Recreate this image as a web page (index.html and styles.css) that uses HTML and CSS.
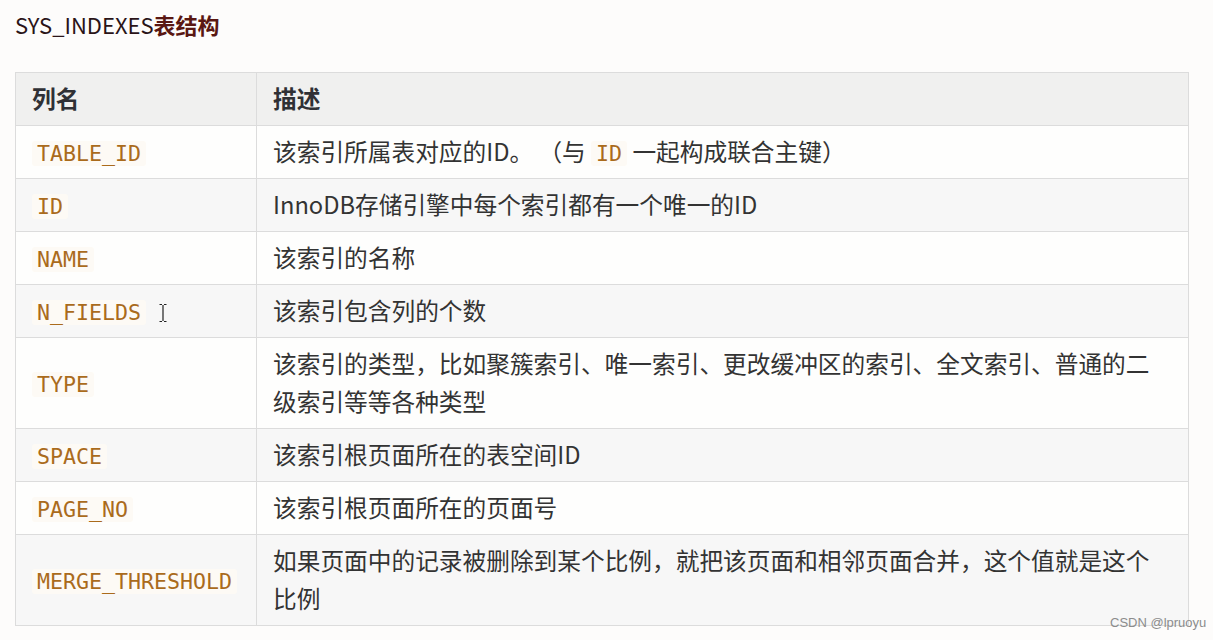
FILE: index.html
```html
<!DOCTYPE html>
<html lang="zh">
<head>
<meta charset="utf-8">
<link rel="stylesheet" href="styles.css">
</head>
<body>
<div class="page">
  <h3 class="title">SYS_INDEXES<span class="title-cn">表结构</span></h3>
  <table class="tbl">
    <colgroup><col class="c1"><col class="c2"></colgroup>
    <thead>
      <tr><th>列名</th><th>描述</th></tr>
    </thead>
    <tbody>
      <tr><td><code>TABLE_ID</code></td><td>该索引所属表对应的ID。 （与 <code>ID</code> 一起构成联合主键）</td></tr>
      <tr><td><code>ID</code></td><td>InnoDB存储引擎中每个索引都有一个唯一的ID</td></tr>
      <tr><td><code>NAME</code></td><td>该索引的名称</td></tr>
      <tr><td><code>N_FIELDS</code><span class="cursor"><svg width="10" height="20" viewBox="0 0 10 20"><path d="M1.5 1.5h2.5M6 1.5h2.5M5 2v16M1.5 18.5h2.5M6 18.5h2.5" stroke="#222" stroke-width="1.2" fill="none"/></svg></span></td><td>该索引包含列的个数</td></tr>
      <tr><td><code>TYPE</code></td><td>该索引的类型，比如聚簇索引、唯一索引、更改缓冲区的索引、全文索引、普通的二级索引等等各种类型</td></tr>
      <tr><td><code>SPACE</code></td><td>该索引根页面所在的表空间ID</td></tr>
      <tr><td><code>PAGE_NO</code></td><td>该索引根页面所在的页面号</td></tr>
      <tr><td><code>MERGE_THRESHOLD</code></td><td>如果页面中的记录被删除到某个比例，就把该页面和相邻页面合并，这个值就是这个比例</td></tr>
    </tbody>
  </table>
  <div class="watermark">CSDN @lpruoyu</div>
</div>
</body>
</html>
```
FILE: styles.css
```css
html, body {
  margin: 0;
  padding: 0;
  background: #fdfcfb;
}
.page {
  position: relative;
  width: 1213px;
  height: 640px;
  padding: 9px 0 0 15px;
  box-sizing: border-box;
  font-family: "Noto Sans CJK SC", "Noto Sans", sans-serif;
}
.title {
  margin: 0;
  font-size: 22px;
  line-height: 30px;
  font-weight: 400;
  color: #2a1418;
}
.title-cn {
  font-weight: 700;
  color: #5a1712;
}
.tbl {
  margin-top: 33px;
  width: 1174px;
  border-collapse: collapse;
  table-layout: fixed;
  font-size: 23.7px;
  color: #333;
}
.c1 { width: 241px; }
.tbl th, .tbl td {
  border: 1px solid #dcdcdc;
  padding: 6px 16px 8px;
  height: 38px;
  line-height: 38px;
  text-align: left;
  vertical-align: middle;
}
.tbl th {
  background: #f0f0ef;
  font-weight: 700;
  color: #2f3035;
}
.tbl tbody tr:nth-child(odd) td { background: #fefefd; }
.tbl tbody tr:nth-child(even) td { background: #f7f7f7; }
.tbl code {
  font-family: "DejaVu Sans Mono", "Liberation Mono", monospace;
  font-size: 21.6px;
  line-height: 1;
  color: #aa6b1c;
  background: #fdfaf5;
  padding: 0 5px;
  border-radius: 3px;
}
.cursor {
  display: inline-block;
  margin-left: 12px;
  line-height: 1;
  vertical-align: -3px;
}
.cursor svg { display: block; }
.watermark {
  position: absolute;
  left: 1110px;
  top: 615px;
  font-family: "Liberation Sans", Arial, sans-serif;
  font-size: 13px;
  color: #8c8c8c;
}
```
